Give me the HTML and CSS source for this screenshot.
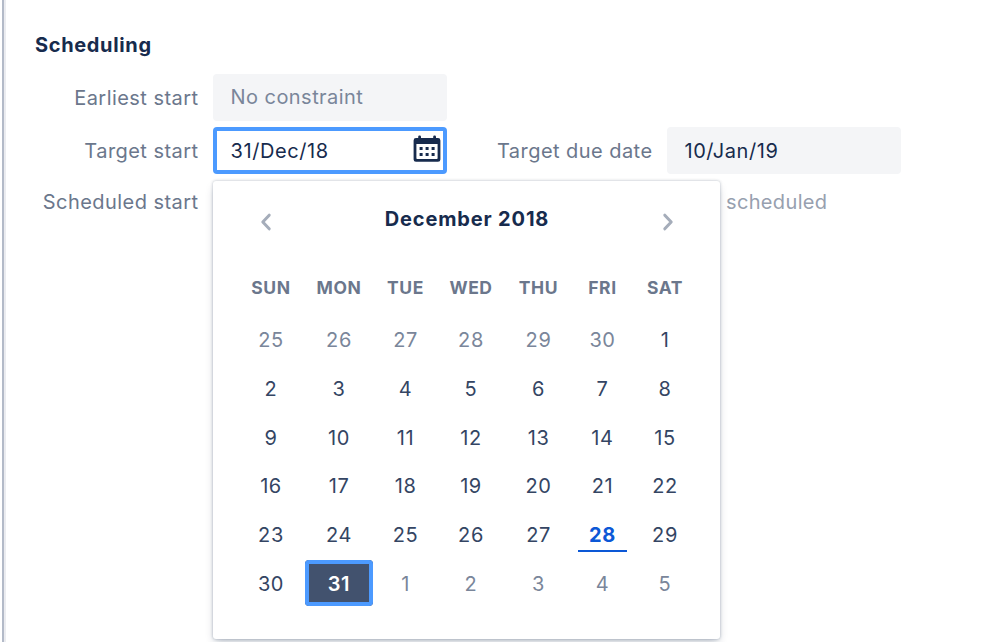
FILE: index.html
```html
<!DOCTYPE html>
<html lang="en">
<head>
<meta charset="utf-8">
<title>Scheduling</title>
<link rel="stylesheet" href="styles.css">
</head>
<body>
<main class="panel">
  <h2 class="heading">Scheduling</h2>
  <div class="form">
    <span class="label earliest">Earliest start</span>
    <div class="field placeholder">No constraint</div>
    <span class="label target">Target start</span>
    <div class="field focused">31/Dec/18
      <svg class="cal-icon" viewBox="0 0 28 28" width="28" height="28">
        <rect x="5.2" y="0.5" width="2.8" height="6" rx="1.2"/>
        <rect x="20.2" y="0.5" width="2.8" height="6" rx="1.2"/>
        <path fill-rule="evenodd" d="M3 3h22q2.400 0 2.400 2.400v19q0 2.400-2.400 2.400H3Q.6 26.800.6 24.400V5.400Q.6 3 3 3zM3.400 9v14.200q0 .8.8.8h19.600q.8 0 .8-.8V9z"/>
        <path d="M6.600 12h3v3h-3zM12.600 12h3v3h-3zM18.600 12h3v3h-3zM6.600 18h3v3h-3zM12.600 18h3v3h-3zM18.600 18h3v3h-3z"/>
      </svg>
      <section class="calendar">
        <header class="cal-head">
          <svg class="arrow" viewBox="0 0 12 18" width="12" height="18"><path d="M9.200 2.200 2.800 9l6.400 6.800"/></svg>
          <strong class="month">December 2018</strong>
          <svg class="arrow" viewBox="0 0 12 18" width="12" height="18"><path d="M2.800 2.200 9.200 9l-6.400 6.800"/></svg>
        </header>
        <div class="week names"><span>SUN</span><span>MON</span><span>TUE</span><span>WED</span><span>THU</span><span>FRI</span><span>SAT</span></div>
        <div class="week"><span class="out">25</span><span class="out">26</span><span class="out">27</span><span class="out">28</span><span class="out">29</span><span class="out">30</span><span>1</span></div>
        <div class="week"><span>2</span><span>3</span><span>4</span><span>5</span><span>6</span><span>7</span><span>8</span></div>
        <div class="week"><span>9</span><span>10</span><span>11</span><span>12</span><span>13</span><span>14</span><span>15</span></div>
        <div class="week"><span>16</span><span>17</span><span>18</span><span>19</span><span>20</span><span>21</span><span>22</span></div>
        <div class="week"><span>23</span><span>24</span><span>25</span><span>26</span><span>27</span><span class="today">28</span><span>29</span></div>
        <div class="week"><span>30</span><span class="selected">31</span><span class="out">1</span><span class="out">2</span><span class="out">3</span><span class="out">4</span><span class="out">5</span></div>
      </section>
    </div>
    <span class="label due">Target due date</span>
    <div class="field due-field">10/Jan/19</div>
    <span class="label scheduled">Scheduled start</span>
    <span class="status">scheduled</span>
  </div>
</main>
</body>
</html>
```

FILE: styles.css
```css
* { box-sizing: border-box; }
body {
  margin: 0;
  background: #fff;
  color: #172b4d;
  font: 400 20px/24px Inter, "Liberation Sans", sans-serif;
  letter-spacing: 0.45px;
}
.panel {
  height: 642px;
  margin-left: 2px;
  padding: 33px 0 0 27px;
  border-left: 2px solid #b3bac8;
  box-shadow: inset 2px 0 #ebecf0;
  overflow: hidden;
}
.heading {
  margin: 0 0 17px 4px;
  font-size: 20px;
  line-height: 25px;
  height: 24px;
  font-weight: 700;
  letter-spacing: 0.65px;
}
.form {
  display: grid;
  grid-template-columns: 182px 234px 220px 234px;
  grid-template-rows: 47px 47px 44px;
  row-gap: 6px;
  align-items: center;
}
.label {
  justify-self: end;
  margin-right: 14.500px;
  color: #6b778c;
  white-space: nowrap;
}
.earliest { grid-area: 1 / 1; }
.target { grid-area: 2 / 1; }
.due { grid-area: 2 / 3; }
.scheduled { grid-area: 3 / 1; }
.field {
  position: relative;
  height: 47px;
  padding: 0 17.500px;
  border-radius: 4px;
  background: #f4f5f7;
  line-height: 49px;
  white-space: nowrap;
}
.placeholder { grid-area: 1 / 2; color: #7a869a; line-height: 47px; }
.focused { grid-area: 2 / 2; background: #fff; box-shadow: inset 0 0 0 4px #4c9aff; letter-spacing: 0.6px; }
.due-field { grid-area: 2 / 4; letter-spacing: 0.55px; }
.cal-icon { position: absolute; left: 200px; top: 8px; fill: #172b4d; }
.status { grid-area: 3 / 4; margin-left: 59px; color: #97a0af; letter-spacing: 0.35px; }
.calendar {
  position: absolute;
  z-index: 2;
  left: 0;
  top: 54px;
  width: 507px;
  height: 458px;
  padding: 23px 23px 0 24px;
  background: #fff;
  border-radius: 3px;
  box-shadow: 0 0 3px rgba(9, 30, 66, .3), 0 5px 10px -2px rgba(9, 30, 66, .25);
  line-height: 24px;
}
.cal-head {
  display: flex;
  justify-content: space-between;
  align-items: center;
  height: 36px;
  margin: 0 23px 36px;
}
.arrow { fill: none; stroke: #a5adba; stroke-width: 3; stroke-linecap: round; stroke-linejoin: round; }
.month { margin-bottom: 6px; font-weight: 700; letter-spacing: 0.85px; }
.week {
  display: grid;
  grid-template-columns: 68px 68px 65px 66px 69px 59px 66px;
  height: 48.800px;
  text-align: center;
  color: #344563;
}
.week span { height: 46px; line-height: 48px; }
.names { height: 40px; color: #6b778c; font-size: 17.500px; font-weight: 700; }
.names span { height: 24px; line-height: 24px; }
.week .out { color: #7a869a; }
.week .today { margin: 0 5px; height: 41px; border-bottom: 2px solid #0c58d6; color: #0c58d6; font-weight: 700; }
.week .selected { background: #42526e; border-radius: 4px; box-shadow: inset 0 0 0 4px #4c9aff; color: #fff; font-weight: 600; }
```
